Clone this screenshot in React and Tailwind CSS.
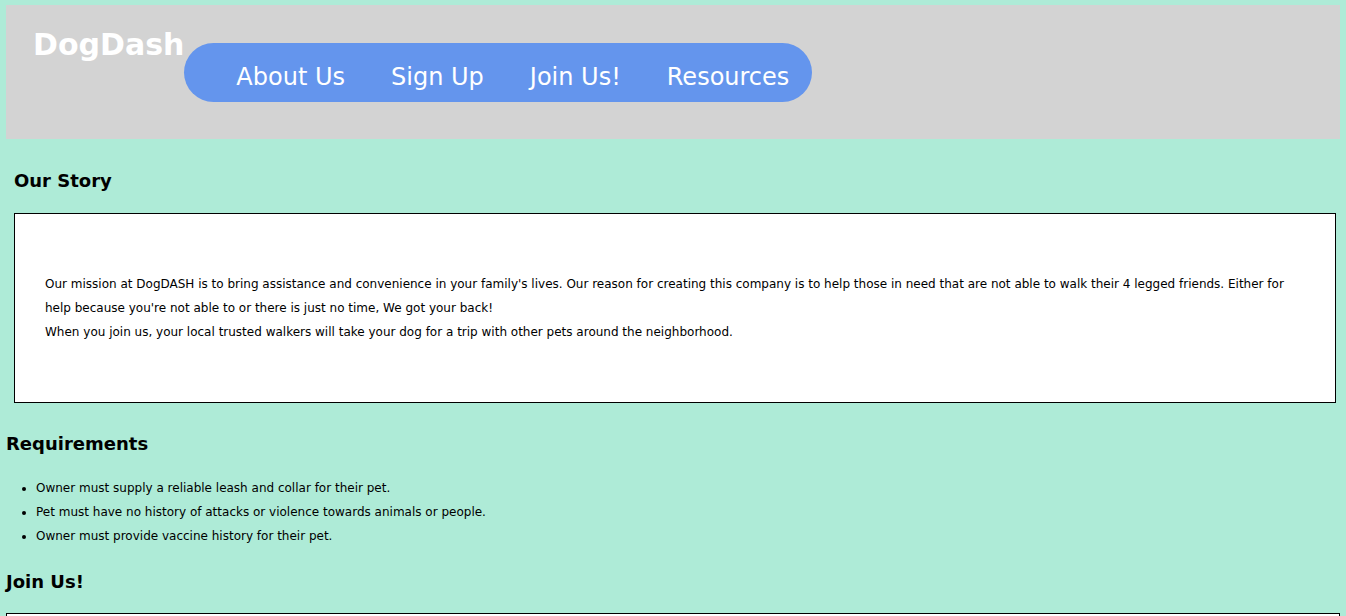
import React from "react";

const navLinks = ["About Us", "Sign Up", "Join Us!", "Resources"];

const requirements = [
  "Owner must supply a reliable leash and collar for their pet.",
  "Pet must have no history of attacks or violence towards animals or people.",
  "Owner must provide vaccine history for their pet.",
];

export default function App() {
  return (
    <div className="min-h-screen bg-[#aeebd7] pt-[5px] text-black" style={{ fontFamily: '"DejaVu Sans", Verdana, sans-serif' }}>
      {/* header */}
      <header className="mx-[6px] h-[134px] bg-[#d3d3d3] flex items-start pl-[27px]">
        <h1 className="mt-[25px] text-[30px] font-bold text-white leading-none">DogDash</h1>
        <nav className="mt-[38px] h-[59px] rounded-full bg-[#6495ed] flex items-center gap-[46px] pl-[52px] pr-[23px]">
          {navLinks.map((link) => (
            <a key={link} href="#" className="text-white text-[24px] pt-[8px]">
              {link}
            </a>
          ))}
        </nav>
      </header>

      <section className="px-[14px] pt-[33px]">
        <h2 className="text-[18px] font-bold leading-none">Our Story</h2>
        <div className="mt-[23px] mr-[-4px] h-[190px] border border-black bg-white pl-[30px] pr-[30px] pt-[58px] text-[12px] leading-[24px]">
          <p>
            Our mission at DogDASH is to bring assistance and convenience in your family's lives. Our reason for creating this company is to help those in need that are not able to walk their 4 legged friends. Either for help because you're not able to or there is just no time, We got your back!
          </p>
          <p>When you join us, your local trusted walkers will take your dog for a trip with other pets around the neighborhood.</p>
        </div>
      </section>

      <section className="px-[6px] pt-[32px]">
        <h2 className="text-[18px] font-bold leading-none">Requirements</h2>
        <ul className="mt-[23px] list-disc pl-[30px] text-[12px] leading-[24px]">
          {requirements.map((r) => (
            <li key={r}>{r}</li>
          ))}
        </ul>
        <h2 className="mt-[25px] text-[18px] font-bold leading-none">Join Us!</h2>
        <div className="mt-[22px] h-[120px] border border-black bg-white" />
      </section>
    </div>
  );
}
